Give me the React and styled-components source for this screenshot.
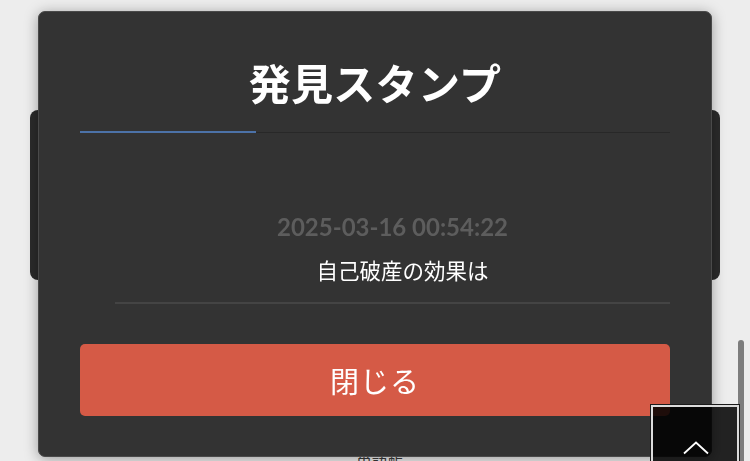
import React from "react";
import styled, { createGlobalStyle } from "styled-components";

const GlobalStyle = createGlobalStyle`
  html, body { margin: 0; padding: 0; }
  body {
    background: #ededed;
    overflow: hidden;
    font-family: "Lato", "Noto Sans CJK JP", sans-serif;
  }
`;

const Page = styled.div`
  width: 750px;
  height: 461px;
  display: flex;
  flex-direction: column;
  align-items: center;
  overflow: hidden;
`;

const BehindCard = styled.div`
  margin-top: 110px;
  width: 690px;
  height: 170px;
  border-radius: 8px;
  background: #2b2b2b;
  flex-shrink: 0;
`;

const PeekText = styled.div`
  margin-top: 172px;
  margin-left: 10px;
  font-family: "Noto Sans CJK JP", sans-serif;
  font-size: 16px;
  line-height: 20px;
  color: #3a3a3a;
  flex-shrink: 0;
`;

const Modal = styled.div`
  position: fixed;
  top: 11px;
  left: 38px;
  width: 674px;
  height: 446px;
  box-sizing: border-box;
  background: #333333;
  border: 1px solid #4a4a4a;
  border-radius: 7px;
  box-shadow: 0 2px 14px rgba(0, 0, 0, 0.35);
  padding: 40px 41px 0;
  display: flex;
  flex-direction: column;
`;

const Title = styled.h2`
  margin: 0;
  text-align: center;
  font-family: "Noto Sans CJK JP", sans-serif;
  font-weight: 700;
  font-size: 42px;
  line-height: 60px;
  color: #ffffff;
  letter-spacing: 0.3px;
`;

const TabBar = styled.div`
  margin-top: 19px;
  display: flex;
  align-items: flex-end;
  border-bottom: 1px solid #282828;
`;

const Tab = styled.div`
  width: ${(p) => p.$width}px;
  height: 2px;
  margin-bottom: -1px;
  background: ${(p) => (p.$active ? "#4c72a8" : "transparent")};
`;

const StampItem = styled.div`
  margin: 79px 0 0 35px;
  display: flex;
  flex-direction: column;
  align-items: center;
  border-bottom: 2px solid #444444;
  padding-bottom: 17px;
`;

const StampDate = styled.div`
  font-family: "Lato", sans-serif;
  font-weight: 700;
  font-size: 24px;
  line-height: 30px;
  color: #5d5d5d;
`;

const StampText = styled.div`
  margin-top: 13px;
  padding-left: 20px;
  font-family: "Noto Sans CJK JP", sans-serif;
  font-size: 21.5px;
  line-height: 30px;
  color: #ffffff;
`;

const CloseButton = styled.button`
  margin-top: 40px;
  height: 72px;
  border: none;
  border-radius: 5px;
  background: #d55a46;
  color: #ffffff;
  font-family: "Noto Sans CJK JP", sans-serif;
  font-size: 29px;
  letter-spacing: 1px;
  cursor: pointer;
`;

const BackToTop = styled.button`
  position: fixed;
  left: 651px;
  top: 405px;
  width: 88px;
  height: 70px;
  box-sizing: border-box;
  padding: 0;
  background: rgba(0, 0, 0, 0.86);
  border: 2px solid #dcdcdc;
  outline: 1px solid #1a1a1a;
  display: flex;
  align-items: flex-start;
  justify-content: center;
  cursor: pointer;
  svg {
    margin-top: 34px;
    margin-left: 1px;
  }
`;

const ScrollThumb = styled.div`
  position: fixed;
  left: 738px;
  top: 340px;
  width: 6px;
  height: 140px;
  border-radius: 3px;
  background: #7d7d7d;
`;

export default function App() {
  return (
    <>
      <GlobalStyle />
      <Page>
        <BehindCard />
        <PeekText>単語帳</PeekText>
      </Page>
      <Modal>
        <Title>発見スタンプ</Title>
        <TabBar>
          <Tab $active $width={176} />
        </TabBar>
        <StampItem>
          <StampDate>2025-03-16 00:54:22</StampDate>
          <StampText>自己破産の効果は</StampText>
        </StampItem>
        <CloseButton>閉じる</CloseButton>
      </Modal>
      <ScrollThumb />
      <BackToTop aria-label="top">
        <svg width="26" height="14" viewBox="0 0 26 14" fill="none">
          <polyline points="1,12.5 13,1.5 25,12.5" stroke="#ffffff" strokeWidth="1.8" />
        </svg>
      </BackToTop>
    </>
  );
}
